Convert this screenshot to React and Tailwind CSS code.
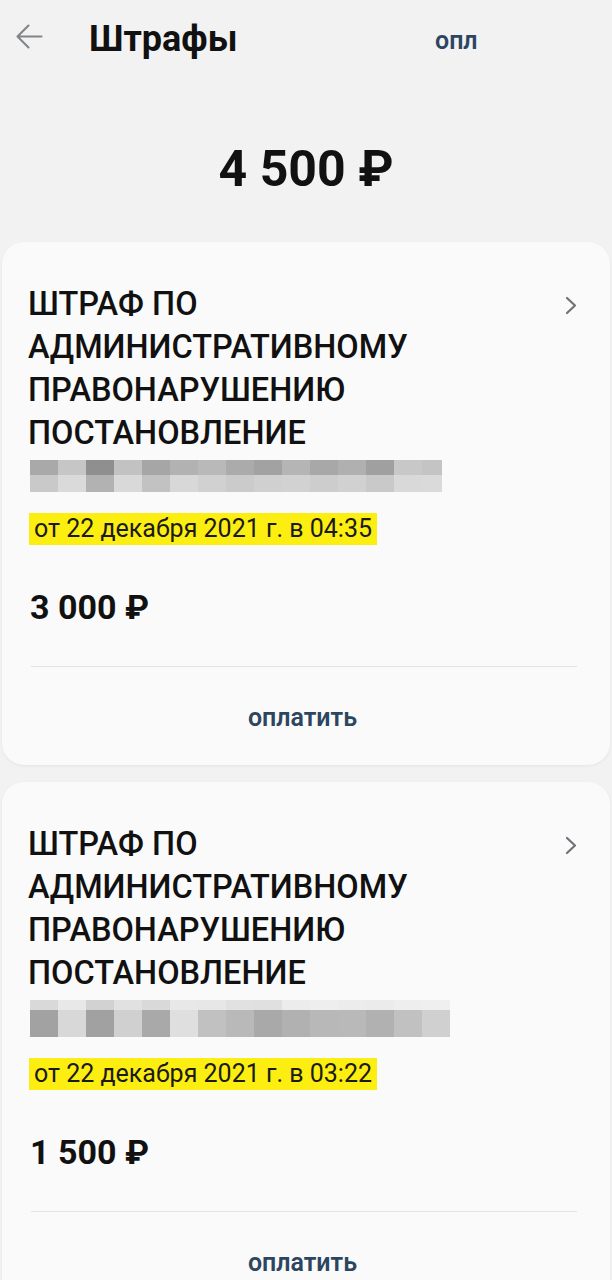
import React from "react";

const blur1Top = ["bg-[#a9a9a9]","bg-[#c6c6c6]","bg-[#8f8f8f]","bg-[#c2c2c2]","bg-[#a6a6a6]","bg-[#b2b2b2]","bg-[#b9b9b9]","bg-[#ababab]","bg-[#a2a2a2]","bg-[#b5b5b5]","bg-[#a8a8a8]","bg-[#b0b0b0]","bg-[#a0a0a0]","bg-[#c8c8c8]","bg-[#c4c4c4]"];
const blur1Bot = ["bg-[#c9c9c9]","bg-[#dadada]","bg-[#b2b2b2]","bg-[#d9d9d9]","bg-[#c2c2c2]","bg-[#d8d8d8]","bg-[#d1d1d1]","bg-[#cbcbcb]","bg-[#d0d0d0]","bg-[#d2d2d2]","bg-[#cdcdcd]","bg-[#d1d1d1]","bg-[#c9c9c9]","bg-[#d9d9d9]","bg-[#dadada]"];
const blur2Top = ["bg-[#d9d9d9]","bg-[#e8e8e8]","bg-[#d2d2d2]","bg-[#e1e1e1]","bg-[#d9d9d9]","bg-[#e8e8e8]","bg-[#e7e7e7]","bg-[#e1e1e1]","bg-[#e0e0e0]","bg-[#ececec]","bg-[#eeeeee]","bg-[#ececec]","bg-[#ebebeb]","bg-[#eeeeee]","bg-[#efefef]"];
const blur2Bot = ["bg-[#a2a2a2]","bg-[#d8d8d8]","bg-[#a1a1a1]","bg-[#d0d0d0]","bg-[#a9a9a9]","bg-[#dfdfdf]","bg-[#c1c1c1]","bg-[#b9b9b9]","bg-[#a9a9a9]","bg-[#b1b1b1]","bg-[#b8b8b8]","bg-[#b9b9b9]","bg-[#b1b1b1]","bg-[#c1c1c1]","bg-[#d0d0d0]"];

function Blur({ top, bot, topH, botH, lastW }) {
  return (
    <div className="flex flex-col">
      <div className={`flex ${topH}`}>
        {top.map((c, i) => (
          <div key={i} className={`${c} ${i === top.length - 1 ? lastW : "w-[28px]"} h-full`} />
        ))}
      </div>
      <div className={`flex ${botH}`}>
        {bot.map((c, i) => (
          <div key={i} className={`${c} ${i === bot.length - 1 ? lastW : "w-[28px]"} h-full`} />
        ))}
      </div>
    </div>
  );
}

function Card({ date, amount, blur, className }) {
  return (
    <div className={`mx-[2px] rounded-[22px] bg-[#fafafa] shadow-[0_1px_3px_rgba(0,0,0,0.06)] pt-[41px] pl-[26px] pr-[33px] pb-[32px] ${className}`}>
      <div className="flex justify-between">
        <div className="text-[32.5px] leading-[43px] font-medium text-[#111111]">
          <div>ШТРАФ ПО</div>
          <div>АДМИНИСТРАТИВНОМУ</div>
          <div>ПРАВОНАРУШЕНИЮ</div>
          <div>ПОСТАНОВЛЕНИЕ</div>
        </div>
        <svg className="mt-[13px] shrink-0" width="12" height="19" viewBox="0 0 12 19" fill="none">
          <path d="M2 2 L10 9.5 L2 17" stroke="#6f7277" strokeWidth="2.2" strokeLinecap="round" strokeLinejoin="round" />
        </svg>
      </div>
      <div className="mt-[5px] ml-[2px]">{blur}</div>
      <div className="mt-[21px] ml-[1px]">
        <span className="inline-block bg-[#fcee10] px-[5px] text-[25px] leading-[32px] text-[#1a1a1a]">{date}</span>
      </div>
      <div className="mt-[42px] ml-[2px] text-[34px] leading-[40px] font-bold text-[#111111]">{amount}</div>
      <div className="mt-[39px] ml-[3px] h-px bg-[#e3e3e3]" />
      <div className="mt-[36px] text-center text-[25px] leading-[30px] font-semibold text-[#2c4660]">оплатить</div>
    </div>
  );
}

export default function App() {
  return (
    <div className="w-[612px] h-[1280px] overflow-hidden bg-[#f2f2f2] font-['Roboto',sans-serif]">
      <div className="flex pt-[17px]">
        <svg className="ml-[15px] mt-[6px] shrink-0" width="28" height="27" viewBox="0 0 28 27" fill="none">
          <path d="M26.5 13.5 H2.5 M13.5 2.5 L2.5 13.5 L13.5 24.5" stroke="#80858c" strokeWidth="2.1" strokeLinecap="round" strokeLinejoin="round" />
        </svg>
        <div className="ml-[46px] w-[346px] text-[36px] leading-[44px] font-bold text-[#111111]">Штрафы</div>
        <div className="mt-[9px] text-[25px] leading-[30px] font-semibold text-[#2c4660]">опл</div>
      </div>
      <div className="mt-[79px] text-center text-[50px] leading-[58px] font-bold text-[#111111]">4 500 ₽</div>
      <Card
        className="mt-[44px]"
        date="от 22 декабря 2021 г. в 04:35"
        amount="3 000 ₽"
        blur={<Blur top={blur1Top} bot={blur1Bot} topH="h-[15px]" botH="h-[17px]" lastW="w-[20px]" />}
      />
      <Card
        className="mt-[17px]"
        date="от 22 декабря 2021 г. в 03:22"
        amount="1 500 ₽"
        blur={<Blur top={blur2Top} bot={blur2Bot} topH="h-[10px]" botH="h-[27px]" lastW="w-[28px]" />}
      />
    </div>
  );
}
